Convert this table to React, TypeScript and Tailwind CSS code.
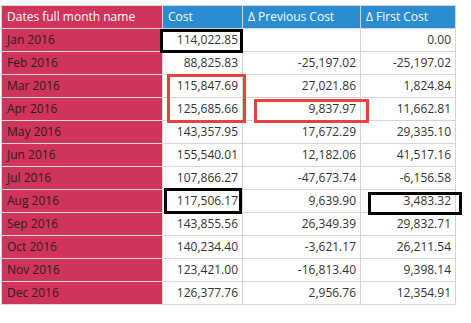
const rows = [
  { month: "Jan 2016", cost: "114,022.85", prev: "", first: "0.00" },
  { month: "Feb 2016", cost: "88,825.83", prev: "-25,197.02", first: "-25,197.02" },
  { month: "Mar 2016", cost: "115,847.69", prev: "27,021.86", first: "1,824.84" },
  { month: "Apr 2016", cost: "125,685.66", prev: "9,837.97", first: "11,662.81" },
  { month: "May 2016", cost: "143,357.95", prev: "17,672.29", first: "29,335.10" },
  { month: "Jun 2016", cost: "155,540.01", prev: "12,182.06", first: "41,517.16" },
  { month: "Jul 2016", cost: "107,866.27", prev: "-47,673.74", first: "-6,156.58" },
  { month: "Aug 2016", cost: "117,506.17", prev: "9,639.90", first: "3,483.32" },
  { month: "Sep 2016", cost: "143,855.56", prev: "26,349.39", first: "29,832.71" },
  { month: "Oct 2016", cost: "140,234.40", prev: "-3,621.17", first: "26,211.54" },
  { month: "Nov 2016", cost: "123,421.00", prev: "-16,813.40", first: "9,398.14" },
  { month: "Dec 2016", cost: "126,377.76", prev: "2,956.76", first: "12,354.91" },
];

const head = "text-white flex items-center pl-[5px] border-r border-b border-[#d4d4d4]";
const num = "text-[#333] flex items-center justify-end pr-[4px] border-r border-b border-[#d4d4d4]";

export default function App() {
  return (
    <div className="relative w-[471px] h-[323px] bg-white overflow-hidden pt-[5px] pl-[1px] font-['Open_Sans',sans-serif] text-[12px]">
      {/* table */}
      <div className="w-fit border-l border-t border-[#d4d4d4] grid grid-cols-[161px_80px_118px_95px] auto-rows-[23px]">
        <div className={`bg-[#d1345b] ${head}`}>Dates full month name</div>
        <div className={`bg-[#2a8dd4] ${head}`}>Cost</div>
        <div className={`bg-[#2a8dd4] ${head}`}>Δ Previous Cost</div>
        <div className={`bg-[#2a8dd4] ${head}`}>Δ First Cost</div>
        {rows.map((r) => (
          <div key={r.month} className="contents">
            <div className="bg-[#d1345b] text-[#2a1a1e] flex items-center pl-[5px] border-r border-b border-[#d9d9d9]">{r.month}</div>
            <div className={num}>{r.cost}</div>
            <div className={num}>{r.prev}</div>
            <div className={num}>{r.first}</div>
          </div>
        ))}
      </div>

      {/* highlight boxes drawn over the table */}
      <div className="absolute left-[160px] top-[29px] w-[83px] h-[24px] border-[3px] border-black" />
      <div className="absolute left-[167px] top-[74px] w-[79px] h-[49px] border-[3px] border-[#e8423f]" />
      <div className="absolute left-[254px] top-[99px] w-[115px] h-[24px] border-[3px] border-[#e8423f]" />
      <div className="absolute left-[164px] top-[188px] w-[78px] h-[26px] border-[3px] border-black" />
      <div className="absolute left-[368px] top-[192px] w-[94px] h-[23px] border-[3px] border-black" />
    </div>
  );
}
